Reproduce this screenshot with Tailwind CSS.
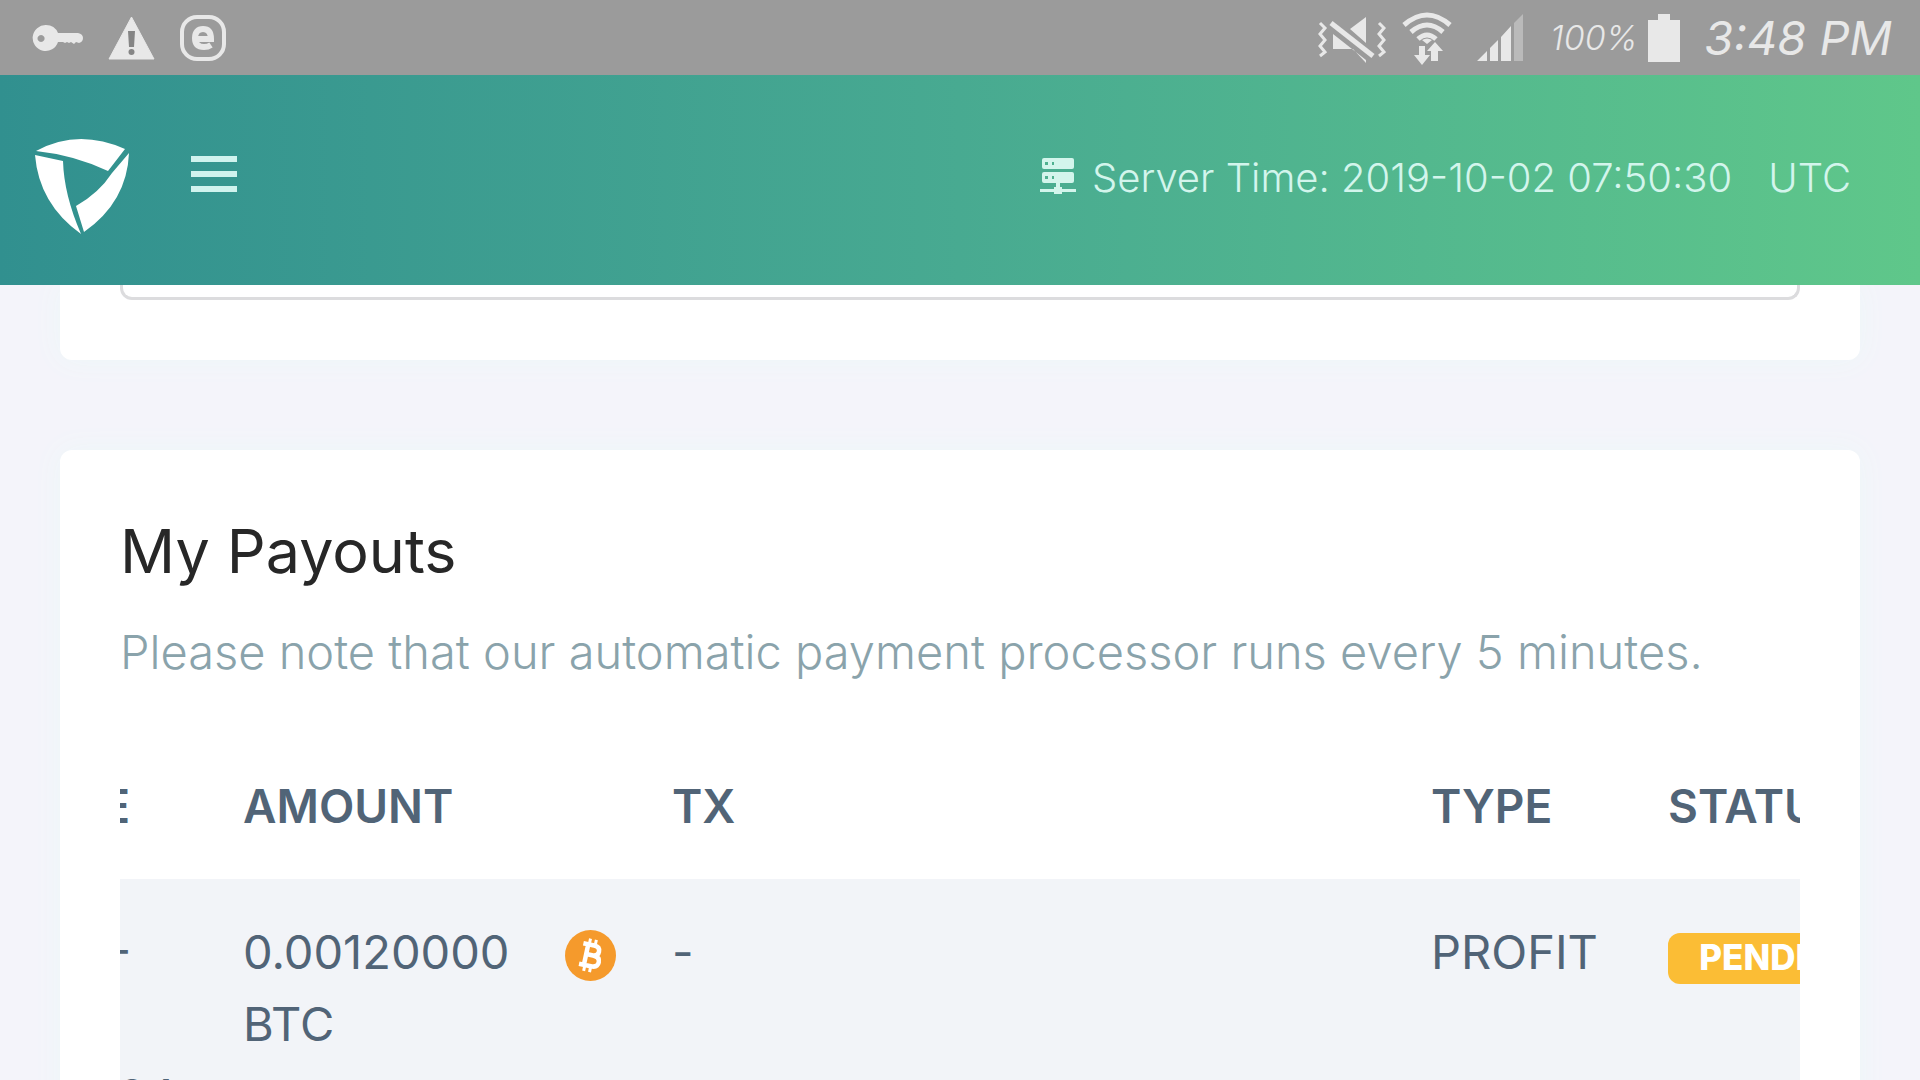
<!DOCTYPE html>
<html lang="en">
<head>
  <meta charset="UTF-8" />
  <meta name="viewport" content="width=device-width, initial-scale=1.0" />
  <title>My Payouts</title>
  <script src="https://cdn.jsdelivr.net/npm/@tailwindcss/browser@4"></script>
</head>
<body class="bg-[#f4f4fa] font-['Inter','Roboto',sans-serif] text-[#516477]">
  <div class="h-screen flex flex-col overflow-hidden">

    <!-- Status bar -->
    <div class="h-[75px] shrink-0 bg-[#9b9b9b] text-[#e8e8e8] flex items-center justify-between pl-8 pr-7">
      <div class="flex items-center gap-6">
        <svg class="w-[52px] h-[30px]" viewBox="0 0 52 30" fill="currentColor">
          <path fill-rule="evenodd" d="M14 2a13 13 0 0 1 12 8h20q5 1 5 5t-4 5l-3-1-2 2-3-2-2 1-2-1-2 1-2-1h-5A13 13 0 1 1 14 2zM9 12a3.500 3.500 0 1 0 .1 0z"/>
        </svg>
        <svg class="w-[47px] h-11" viewBox="0 0 47 44">
          <path fill="currentColor" d="M23.500 1 46 43H1z" stroke="currentColor" stroke-linejoin="round"/>
          <path fill="#858585" d="M20 15h7l-1 16h-5z"/><circle cx="23.500" cy="36" r="3" fill="#858585"/>
        </svg>
        <svg class="w-12 h-12" viewBox="0 0 48 48" fill="none" stroke="currentColor">
          <rect x="3" y="3" width="42" height="42" rx="15" stroke-width="4"/>
          <path stroke-width="6" d="M15 25h17c0-7-3-10-8-10s-8 3-8 9 3 9 9 9q4 0 7-2"/>
        </svg>
      </div>
      <div class="flex items-center">
        <svg class="w-[70px] h-[54px]" viewBox="0 0 70 54" fill="currentColor">
          <path fill="none" stroke="currentColor" stroke-width="3" d="m4 12 5 5-5 6 5 6-5 6 5 6-5 4M63 12l5 5-5 6 5 6-5 6 5 6-5 4"/>
          <path d="M50 6v26L34 18zM17 23l33 26v3L37 38H17z"/>
          <path fill="none" stroke="#9b9b9b" stroke-width="11" d="m15 12 42 33"/>
          <path fill="none" stroke="currentColor" stroke-width="5" d="m15 12 42 33"/>
        </svg>
        <svg class="w-[50px] h-[54px] ml-4" viewBox="0 0 50 54" fill="none" stroke="currentColor">
          <path stroke-width="5" d="M2 14q23-20 46 0M9 21q16-14 32 0M16 28q9-8 18 0"/>
          <path fill="currentColor" stroke="none" d="m25 33-5-4q5-3 10 0zM17 35h6v9h5l-8 10-8-10h5zM29 50h7V40h5l-8-9-8 9h4z"/>
        </svg>
        <svg class="w-[50px] h-12 ml-6" viewBox="0 0 50 48" fill="currentColor">
          <path d="M1 47 11 37v10zM14 34l8-8v21h-8zM25 23l10-11v35H25z"/>
          <path opacity=".4" d="m38 9 9-9v47h-9z"/>
        </svg>
        <span class="ml-6 text-[34px] leading-none font-light italic w-[90px]">100%</span>
        <svg class="w-8 h-12 ml-2" viewBox="0 0 32 48" fill="currentColor"><path d="M10 0h12v6h10v42H0V6h10z"/></svg>
        <span class="ml-6 text-[47px] leading-none italic whitespace-nowrap">3:48 PM</span>
      </div>
    </div>

    <!-- Header -->
    <header class="h-[210px] shrink-0 bg-linear-to-r from-[#31908f] via-[#48aa91] to-[#5fc78a] text-[#d3f5ec] flex items-center pl-[35px] pr-[69px]">
      <a href="#" aria-label="Home" class="mt-3">
        <svg class="w-[95px] h-[97px]" viewBox="0 0 95 97" fill="#fff">
          <path d="M1 13Q43-10 90 11L73 33Q39 17 1 13z"/>
          <path d="m0 17 28 6q1 34 18 73Q4 66 0 17z"/>
          <path d="M94 15Q92 64 49 94l-8-26q23-13 36-33z"/>
        </svg>
      </a>
      <button type="button" aria-label="Menu" class="ml-[61px] mb-3 flex flex-col gap-[9px]">
        <span class="block w-[46px] h-1.5 bg-[#d0f3ee]"></span>
        <span class="block w-[46px] h-1.5 bg-[#d0f3ee]"></span>
        <span class="block w-[46px] h-1.5 bg-[#d0f3ee]"></span>
      </button>
      <div class="ml-auto mb-1 flex items-center text-[40px] leading-none font-light whitespace-nowrap">
        <svg class="w-9 h-9 mr-4 mb-1" viewBox="0 0 36 36" fill="currentColor">
          <rect x="2" width="32" height="11" rx="2"/>
          <path d="M4 14h28q2 0 2 2v7q0 2-2 2H20v4h2v2h14v3H22v2h-8v-2H0v-3h14v-2h2v-4H4q-2 0-2-2v-7q0-2 2-2z"/>
          <path fill="#4fb190" d="M5 4h3v3H5zM12 4h2v3h-2zM5 18h3v3H5zM12 18h2v3h-2z"/>
        </svg>
        <span>Server Time: 2019-10-02 07:50:30</span>
        <span class="ml-9">UTC</span>
      </div>
    </header>

    <main class="flex-1 min-h-0 overflow-hidden px-[60px]">
      <section class="bg-white rounded-b-xl px-[60px] pb-[60px] shadow-[0_0_28px_#edf8f9]">
        <div class="h-[15px] border-[3px] border-t-0 border-[#dcdcde] rounded-b-xl"></div>
      </section>

      <!-- Payouts -->
      <section class="mt-[90px] bg-white rounded-xl p-[60px] shadow-[0_0_28px_#edf8f9]">
        <h1 class="text-[61px] leading-[82px] text-[#272727]">My Payouts</h1>
        <p class="mt-6 text-[47px] leading-[72px] font-light text-[#8aa3ab] whitespace-nowrap">Please note that our automatic payment processor runs every 5 minutes.</p>

        <div class="mt-[46px] overflow-hidden">
          <table class="table-fixed w-[1965px] -ml-[153px] text-[47px] leading-[72px] text-left">
            <colgroup>
              <col class="w-[240px]" />
              <col class="w-[429px]" />
              <col class="w-[759px]" />
              <col class="w-[237px]" />
              <col class="w-[300px]" />
            </colgroup>
            <thead class="text-[46px]">
              <tr>
                <th class="pl-11 pt-9 pb-[37px] font-semibold">DATE</th>
                <th class="pl-9 pt-9 pb-[37px] font-semibold">AMOUNT</th>
                <th class="pl-9 pt-9 pb-[37px] font-semibold">TX</th>
                <th class="pl-9 pt-9 pb-[37px] font-semibold">TYPE</th>
                <th class="pl-9 pt-9 pb-[37px] font-semibold">STATUS</th>
              </tr>
            </thead>
            <tbody>
              <tr class="bg-[#f2f4f8] align-top">
                <td class="pl-9 pt-[37px] pb-9 whitespace-nowrap">2019-<br />10-<br />02 0:24</td>
                <td class="pl-9 pt-[37px] pb-9 pr-5">
                  <div class="flex justify-between">
                    <span>0.00120000<br />BTC</span>
                    <svg class="w-[51px] h-[51px] mt-[14px] shrink-0" viewBox="0 0 51 51">
                      <circle cx="25.500" cy="25.500" r="25.500" fill="#f59a2c"/>
                      <g transform="rotate(12 25.500 25.500)" fill="none" stroke="#fff">
                        <path stroke-width="4.500" d="M16 15h11q6 0 6 5t-6 5h-6 7q7 0 7 5.500T28 36H16M21 15v21"/>
                        <path stroke-width="3" d="M22 9v6M28 9v6M22 36v6M28 36v6"/>
                      </g>
                    </svg>
                  </div>
                </td>
                <td class="pl-9 pt-[37px] pb-9">-</td>
                <td class="pl-9 pt-[37px] pb-9">PROFIT</td>
                <td class="pl-9 pt-[37px] pb-9"><span class="mt-[17px] block w-[222px] h-[51px] rounded-xl bg-[#fbbd35] text-white text-[35px] leading-[49px] font-extrabold text-center">PENDING</span></td>
              </tr>
            </tbody>
          </table>
        </div>
      </section>
    </main>

  </div>
</body>
</html>
